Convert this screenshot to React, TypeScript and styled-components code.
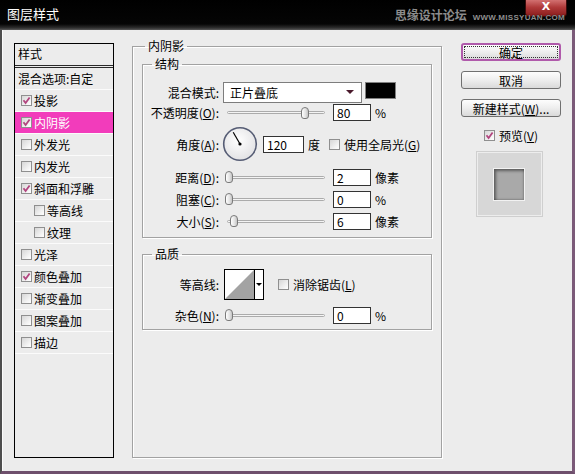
import React from "react";
import styled, { createGlobalStyle } from "styled-components";

const GlobalStyle = createGlobalStyle`
  html, body { margin: 0; padding: 0; background: #ececec; }
  body {
    font-family: "Noto Sans CJK SC", "Noto Sans", sans-serif;
    font-size: 12px;
    color: #000;
  }
  * { box-sizing: border-box; }
`;

const Window = styled.div`
  width: 575px;
  height: 474px;
  display: flex;
  flex-direction: column;
  overflow: hidden;
  background: #000;
`;

const TitleBar = styled.div`
  position: relative;
  flex: none;
  height: 30px;
  display: flex;
  align-items: center;
  padding-left: 7px;
  background: linear-gradient(#000 0%, #050505 80%, #2e2e2e 93%, #5a5a5a 100%);
  border-radius: 4px 4px 0 0;
`;

const Title = styled.div`
  color: #fff;
  font-size: 13px;
  line-height: 16px;
  margin-top: -3px;
`;

const Watermark = styled.div`
  position: relative;
  z-index: 2;
  margin-left: auto;
  margin-right: 10px;
  display: flex;
  align-items: center;
  gap: 6px;
  margin-top: -1px;
`;

const WmCn = styled.span`
  color: #8c8c8c;
  font-size: 12px;
  font-weight: bold;
  text-shadow: 0 0 1px #000;
`;

const WmEn = styled.span`
  color: #8e8e8e;
  font-family: "Liberation Sans", Arial, sans-serif;
  font-weight: bold;
  font-size: 8px;
  line-height: 9px;
  letter-spacing: 0.3px;
  margin-top: 6px;
  text-shadow: 0 0 1px #000;
`;

const CloseBtn = styled.div`
  position: absolute;
  z-index: 1;
  top: 0;
  right: 8px;
  width: 42px;
  height: 17px;
  display: flex;
  align-items: flex-start;
  justify-content: center;
  padding-top: 1px;
  color: #fff;
  font: bold 11px/11px "DejaVu Sans", sans-serif;
  background: linear-gradient(#d27070 0%, #b03a3a 45%, #8a1c1c 100%);
  border: 1px solid #3c0c0c;
  border-top: none;
  border-radius: 0 0 4px 4px;
`;

const Frame = styled.div`
  flex: 1;
  display: flex;
  align-items: flex-start;
  padding-left: 12px;
  background: #ececec;
  border-left: 2px solid #4e4e4e;
  border-right: 3px solid #7b5a79;
  border-bottom: 3px solid #6e4f6c;
  box-shadow: inset 1px 0 0 #fbfbfb;
`;

/* ---------- left style list ---------- */

const StyleList = styled.div`
  flex: none;
  margin-top: 13px;
  width: 100px;
  height: 415px;
  border: 1px solid #000;
  display: flex;
  flex-direction: column;
`;

const ListHeader = styled.div`
  height: 24px;
  padding: 0 0 3px 3px;
  display: flex;
  align-items: center;
  border-bottom: 3px double #2a2a2a;
`;

const ListRow = styled.div<{ $indent?: boolean; $active?: boolean; $plain?: boolean }>`
  height: 22px;
  display: flex;
  align-items: center;
  gap: 2px;
  padding-left: ${(p) => (p.$plain ? "3px" : p.$indent ? "19px" : "6px")};
  border-bottom: 1px solid #fbfbfb;
  background: ${(p) => (p.$active ? "#f23cbb" : "transparent")};
  color: ${(p) => (p.$active ? "#fff" : "#000")};
  white-space: nowrap;
`;

const Box = styled.span`
  flex: none;
  width: 11px;
  height: 11px;
  border: 1px solid #8f8f8f;
  background: linear-gradient(135deg, #d6d6d6, #f4f4f4 70%, #fff);
  display: inline-flex;
  align-items: center;
  justify-content: center;
`;

const Check = ({ checked }: { checked?: boolean }) => (
  <Box>
    {checked && (
      <svg width="9" height="9" viewBox="0 0 9 9">
        <path d="M1.5 4.2 L3.6 7 L7.6 1.4" fill="none" stroke="#b2467f" strokeWidth="1.8" />
      </svg>
    )}
  </Box>
);

/* ---------- middle settings ---------- */

const Group = styled.fieldset<{ $h?: number; $pad: string }>`
  margin: 0;
  min-width: 0;
  padding: ${(p) => p.$pad};
  border: 1px solid #a2a2a2;
  box-shadow: 1px 1px 0 #fff, inset 1px 1px 0 #fff;
  ${(p) => (p.$h ? `height: ${p.$h}px;` : "")}
`;

const Outer = styled(Group)`
  flex: none;
  width: 310px;
  margin: 8px 0 0 18px;
`;

const SubGroup = styled(Group)<{ $mt?: number }>`
  width: 290px;
  margin-top: ${(p) => p.$mt ?? 0}px;
`;

const Legend = styled.legend<{ $ml: number }>`
  margin-left: ${(p) => p.$ml}px;
  padding: 0 3px;
  line-height: 16px;
  font-size: 12px;
`;

const Row = styled.div<{ $h: number; $mt?: number }>`
  height: ${(p) => p.$h}px;
  margin-top: ${(p) => p.$mt ?? 0}px;
  display: grid;
  grid-template-columns: 76px auto;
  column-gap: 4px;
  align-items: center;
`;

const Label = styled.span`
  text-align: right;
  white-space: nowrap;
`;

const Controls = styled.div`
  display: flex;
  align-items: center;
  white-space: nowrap;
`;

const Select = styled.div`
  width: 139px;
  height: 21px;
  background: #fff;
  border: 1px solid #7d7d7d;
  display: flex;
  align-items: center;
  padding: 0 7px 0 6px;
  justify-content: space-between;
`;

const Arrow = styled.span`
  width: 0;
  height: 0;
  border-left: 4px solid transparent;
  border-right: 4px solid transparent;
  border-top: 4px solid #4a1a2c;
`;

const Swatch = styled.div`
  width: 31px;
  height: 17px;
  margin: 0 0 4px 3px;
  background: #000;
  border: 1px solid #808080;
`;

const Slider = styled.div`
  position: relative;
  width: 106px;
  height: 14px;
  display: flex;
  align-items: center;
`;

const Track = styled.div`
  flex: 1;
  margin: 0 4px;
  height: 3px;
  border: 1px solid #ababab;
  border-radius: 2px;
  background: #f4f4f4;
`;

const Thumb = styled.div`
  position: absolute;
  top: 1px;
  width: 8px;
  height: 12px;
  border: 1px solid #7a7a7a;
  border-radius: 4px 4px 3px 3px;
  background: linear-gradient(90deg, #fff, #e2e2e2 60%, #c4c4c4);
`;

const NumBox = styled.div<{ $w?: number; $ml?: number }>`
  width: ${(p) => p.$w ?? 38}px;
  height: 17px;
  margin-left: ${(p) => p.$ml ?? 4}px;
  background: #fff;
  border: 1px solid #333;
  padding-left: 3px;
  line-height: 15px;
`;

const Unit = styled.span<{ $ml?: number }>`
  margin-left: ${(p) => p.$ml ?? 4}px;
`;

const CheckLabel = styled.span<{ $ml?: number }>`
  display: inline-flex;
  align-items: center;
  gap: 4px;
  margin-left: ${(p) => p.$ml ?? 0}px;
`;

const Contour = styled.div`
  width: 40px;
  height: 31px;
  margin-left: 1px;
  border: 1px solid #000;
  display: flex;
  background: #fff;
`;

const ContourArrow = styled.div`
  flex: 1;
  border-left: 1px solid #000;
  display: flex;
  align-items: center;
  justify-content: center;
  &::after {
    content: "";
    border-left: 3px solid transparent;
    border-right: 3px solid transparent;
    border-top: 3px solid #000;
  }
`;

/* ---------- right column ---------- */

const Side = styled.div`
  flex: none;
  width: 100px;
  margin: 13px 0 0 19px;
  display: flex;
  flex-direction: column;
  align-items: center;
  gap: 10px;
`;

const Button = styled.div<{ $primary?: boolean }>`
  width: 100px;
  height: 18px;
  display: flex;
  align-items: center;
  justify-content: center;
  border-radius: 3px;
  background: linear-gradient(#fdfdfd, #eeeeee 50%, #dadada);
  border: ${(p) => (p.$primary ? "2px solid #b05aab" : "1px solid #707070")};
  outline: ${(p) => (p.$primary ? "1px dotted #333" : "none")};
  outline-offset: -4px;
  white-space: nowrap;
`;

const Preview = styled.div`
  margin-top: -2px;
  width: 65px;
  height: 64px;
  margin-left: -4px;
  background: #d7d7d7;
  border: 1px solid #ededed;
  box-shadow: 0 0 0 1px #cfcfcf;
  display: flex;
  align-items: center;
  justify-content: center;
`;

const PreviewSquare = styled.div`
  width: 32px;
  height: 33px;
  background: #a9a9a9;
  border: 1px solid #f2f2f2;
  box-shadow: inset 2px 2px 3px rgba(0, 0, 0, 0.45), inset -1px -1px 2px rgba(0, 0, 0, 0.2);
`;

const SliderCtl = ({ center }: { center: number }) => (
  <Slider>
    <Track />
    <Thumb style={{ left: center - 4 }} />
  </Slider>
);

const Dial = () => (
  <svg width="36" height="36" viewBox="0 0 36 36" style={{ marginLeft: -1 }}>
    <defs>
      <radialGradient id="dialg" cx="45%" cy="40%" r="60%">
        <stop offset="0%" stopColor="#ffffff" />
        <stop offset="100%" stopColor="#e2e2e4" />
      </radialGradient>
    </defs>
    <circle cx="18" cy="18" r="16.3" fill="url(#dialg)" stroke="#555c74" strokeWidth="1.6" />
    <line x1="18" y1="18" x2="11.2" y2="6.3" stroke="#000" strokeWidth="1.2" />
    <circle cx="18" cy="18" r="1.6" fill="#000" />
  </svg>
);

const items: { label: string; checked?: boolean; indent?: boolean; active?: boolean }[] = [
  { label: "投影", checked: true },
  { label: "内阴影", checked: true, active: true },
  { label: "外发光" },
  { label: "内发光" },
  { label: "斜面和浮雕", checked: true },
  { label: "等高线", indent: true },
  { label: "纹理", indent: true },
  { label: "光泽" },
  { label: "颜色叠加", checked: true },
  { label: "渐变叠加" },
  { label: "图案叠加" },
  { label: "描边" },
];

export default function App() {
  return (
    <>
      <GlobalStyle />
      <Window>
        <TitleBar>
          <Title>图层样式</Title>
          <Watermark>
            <WmCn>思缘设计论坛</WmCn>
            <WmEn>WWW.MISSYUAN.COM</WmEn>
          </Watermark>
          <CloseBtn>X</CloseBtn>
        </TitleBar>
        <Frame>
          <StyleList>
            <ListHeader>样式</ListHeader>
            <ListRow $plain>混合选项:自定</ListRow>
            {items.map((it) => (
              <ListRow key={it.label} $indent={it.indent} $active={it.active}>
                <Check checked={it.checked} />
                <span>{it.label}</span>
              </ListRow>
            ))}
          </StyleList>

          <Outer $h={420} $pad="2px 9px 0 9px">
            <Legend $ml={3}>内阴影</Legend>
            <SubGroup $pad="9px 0 5px 0">
              <Legend $ml={9}>结构</Legend>
              <Row $h={22}>
                <Label>混合模式:</Label>
                <Controls>
                  <Select>
                    <span>正片叠底</span>
                    <Arrow />
                  </Select>
                  <Swatch />
                </Controls>
              </Row>
              <Row $h={19}>
                <Label>
                  不透明度(<u>O</u>):
                </Label>
                <Controls>
                  <SliderCtl center={82} />
                  <NumBox>80</NumBox>
                  <Unit>%</Unit>
                </Controls>
              </Row>
              <Row $h={44}>
                <Label>
                  角度(<u>A</u>):
                </Label>
                <Controls>
                  <Dial />
                  <NumBox $w={41} $ml={5}>
                    120
                  </NumBox>
                  <Unit>度</Unit>
                  <CheckLabel $ml={9}>
                    <Check />
                    <span>
                      使用全局光(<u>G</u>)
                    </span>
                  </CheckLabel>
                </Controls>
              </Row>
              <Row $h={22}>
                <Label>
                  距离(<u>D</u>):
                </Label>
                <Controls>
                  <SliderCtl center={6} />
                  <NumBox>2</NumBox>
                  <Unit>像素</Unit>
                </Controls>
              </Row>
              <Row $h={22}>
                <Label>
                  阻塞(<u>C</u>):
                </Label>
                <Controls>
                  <SliderCtl center={6} />
                  <NumBox>0</NumBox>
                  <Unit>%</Unit>
                </Controls>
              </Row>
              <Row $h={22}>
                <Label>
                  大小(<u>S</u>):
                </Label>
                <Controls>
                  <SliderCtl center={11} />
                  <NumBox>6</NumBox>
                  <Unit>像素</Unit>
                </Controls>
              </Row>
            </SubGroup>

            <SubGroup $mt={8} $pad="6px 0 3px 0">
              <Legend $ml={9}>品质</Legend>
              <Row $h={33}>
                <Label>等高线:</Label>
                <Controls>
                  <Contour>
                    <svg width="29" height="29" viewBox="0 0 29 29">
                      <polygon points="0,29 29,0 29,29" fill="#a3a3a3" />
                    </svg>
                    <ContourArrow />
                  </Contour>
                  <CheckLabel $ml={14}>
                    <Check />
                    <span>
                      消除锯齿(<u>L</u>)
                    </span>
                  </CheckLabel>
                </Controls>
              </Row>
              <Row $h={22} $mt={3}>
                <Label>
                  杂色(<u>N</u>):
                </Label>
                <Controls>
                  <SliderCtl center={6} />
                  <NumBox>0</NumBox>
                  <Unit>%</Unit>
                </Controls>
              </Row>
            </SubGroup>
          </Outer>

          <Side>
            <Button $primary>确定</Button>
            <Button>取消</Button>
            <Button>
              新建样式(<u>W</u>)...
            </Button>
            <CheckLabel>
              <Check checked />
              <span>
                预览(<u>V</u>)
              </span>
            </CheckLabel>
            <Preview>
              <PreviewSquare />
            </Preview>
          </Side>
        </Frame>
      </Window>
    </>
  );
}
